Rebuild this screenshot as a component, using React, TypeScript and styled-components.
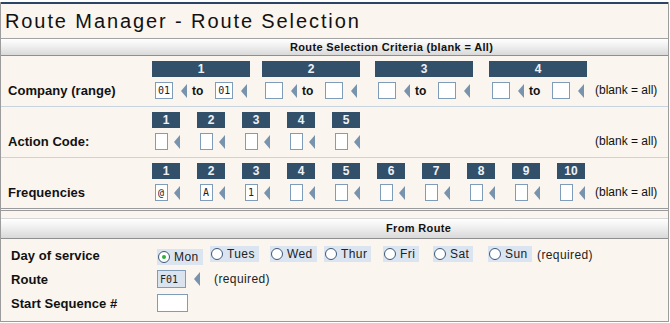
import { FC } from "react";
import styled, { createGlobalStyle } from "styled-components";

const GlobalStyle = createGlobalStyle`
  body {
    margin: 0;
    background: #ffffff;
    font-family: "Liberation Sans", Arial, sans-serif;
    color: #111;
  }
`;

const rangeGroups = [
  { n: "1", pitch: 110, from: "01", to: "01" },
  { n: "2", pitch: 113, from: "", to: "" },
  { n: "3", pitch: 114, from: "", to: "" },
  { n: "4", pitch: 106, from: "", to: "" },
];

const actionCodes = ["", "", "", "", ""];
const frequencies = ["@", "A", "1", "", "", "", "", "", "", ""];

const days = [
  { name: "Mon", slot: 53, on: true },
  { name: "Tues", slot: 60 },
  { name: "Wed", slot: 54 },
  { name: "Thur", slot: 59 },
  { name: "Fri", slot: 50 },
  { name: "Sat", slot: 55 },
  { name: "Sun", slot: 49 },
];

const App: FC = () => {
  return (
    <>
      <GlobalStyle />
      <Page>
        <TopLine />
        <Title>Route Manager - Route Selection</Title>

        <Criteria>
          <SectionHeader indent={289}>Route Selection Criteria (blank = All)</SectionHeader>

          <CritRow>
            <Label>Company (range)</Label>
            <Groups>
              {rangeGroups.map((g) => (
                <Group key={g.n} pitch={g.pitch}>
                  <Bar width={98}>{g.n}</Bar>
                  <InputLine>
                    <Field width={18} style={{ marginLeft: 3 }} defaultValue={g.from} />
                    <Arrow gap={8} />
                    <To>to</To>
                    <Field width={18} style={{ marginLeft: 12 }} defaultValue={g.to} />
                    <Arrow gap={8} />
                  </InputLine>
                </Group>
              ))}
            </Groups>
            <Note>(blank = all)</Note>
          </CritRow>

          <CritRow>
            <Label>Action Code:</Label>
            <Groups>
              {actionCodes.map((v, i) => (
                <Group key={i} pitch={45}>
                  <Bar width={28}>{i + 1}</Bar>
                  <InputLine>
                    <Field width={13} style={{ marginLeft: 3 }} defaultValue={v} />
                    <Arrow gap={6} />
                  </InputLine>
                </Group>
              ))}
            </Groups>
            <Note>(blank = all)</Note>
          </CritRow>

          <CritRow last>
            <Label>Frequencies</Label>
            <Groups>
              {frequencies.map((v, i) => (
                <Group key={i} pitch={45}>
                  <Bar width={28}>{i + 1}</Bar>
                  <InputLine>
                    <Field width={13} style={{ marginLeft: 3 }} defaultValue={v} />
                    <Arrow gap={6} />
                  </InputLine>
                </Group>
              ))}
            </Groups>
            <Note>(blank = all)</Note>
          </CritRow>
        </Criteria>

        <FromRoute>
          <SectionHeader indent={385} tall>From Route</SectionHeader>
          <FromBody>
            <FRow>
              <FLabel>Day of service</FLabel>
              {days.map((d) => (
                <Slot key={d.name} width={d.slot}>
                  <Choice>
                    <Radio type="radio" name="day" defaultChecked={!!d.on} />
                    <span>{d.name}</span>
                  </Choice>
                </Slot>
              ))}
              <Plain>(required)</Plain>
            </FRow>
            <FRow>
              <FLabel>Route</FLabel>
              <Field width={29} tall shaded defaultValue="F01" />
              <Arrow gap={8} />
              <Plain style={{ marginLeft: 14 }}>(required)</Plain>
            </FRow>
            <FRow>
              <FLabel>Start Sequence #</FLabel>
              <Field width={31} tall defaultValue="" />
            </FRow>
          </FromBody>
        </FromRoute>
      </Page>
    </>
  );
};

export default App;

const Page = styled.div`
  width: 667px;
  margin-top: 2px;
  border-left: 1px solid #9c9c9c;
  border-right: 1px solid #9c9c9c;
  background: #faf5ee;
`;

const TopLine = styled.div`
  height: 2px;
  background: #2c4565;
`;

const Title = styled.div`
  height: 34px;
  line-height: 34px;
  padding-left: 4px;
  font-size: 20px;
  letter-spacing: 1.9px;
  color: #111;
`;

const Criteria = styled.div`
  border-top: 1px solid #a3a3a3;
  border-bottom: 3px double #9a9a9a;
`;

const SectionHeader = styled.div<{ indent: number; tall?: boolean }>`
  height: ${(p) => (p.tall ? 19 : 16)}px;
  line-height: ${(p) => (p.tall ? 19 : 16)}px;
  padding-left: ${(p) => p.indent}px;
  background: linear-gradient(#ffffff, #f1f1f1 40%, #d9d9d9);
  border-bottom: 1px solid #8f8f8f;
  font-size: 11px;
  font-weight: bold;
  letter-spacing: 0.35px;
  color: #111;
`;

const CritRow = styled.div<{ last?: boolean }>`
  display: grid;
  grid-template-columns: 151px 443px 1fr;
  padding: 5px 0 7px;
  border-bottom: ${(p) => (p.last ? "none" : "1px solid #c8d4e0")};
`;

const Label = styled.div`
  align-self: end;
  height: 17px;
  line-height: 17px;
  padding-left: 7px;
  white-space: nowrap;
  font-size: 13px;
  font-weight: bold;
  letter-spacing: 0.05px;
`;

const Groups = styled.div`
  display: flex;
  min-width: 0;
`;

const Group = styled.div<{ pitch: number }>`
  display: flex;
  flex-direction: column;
  width: ${(p) => p.pitch}px;
  flex-shrink: 0;
`;

const Bar = styled.div<{ width: number }>`
  width: ${(p) => p.width}px;
  height: 16px;
  line-height: 16px;
  background: #33506b;
  color: #eef2f6;
  font-size: 12px;
  font-weight: bold;
  text-align: center;
`;

const InputLine = styled.div`
  display: flex;
  align-items: center;
  margin-top: 5px;
  height: 17px;
`;

const Field = styled.input<{ width: number; tall?: boolean; shaded?: boolean }>`
  box-sizing: border-box;
  width: ${(p) => p.width}px;
  height: ${(p) => (p.tall ? 18 : 17)}px;
  margin: 0;
  padding: 0 2px;
  border: 1px solid #7f9db9;
  background: ${(p) => (p.shaded ? "#dbe4ee" : "#ffffff")};
  font-family: "DejaVu Sans Mono", "Liberation Mono", monospace;
  font-size: 10px;
  color: #222;
  outline: none;
`;

const Arrow = styled.span<{ gap: number }>`
  display: inline-block;
  margin-left: ${(p) => p.gap}px;
  width: 0;
  height: 0;
  border-top: 7px solid transparent;
  border-bottom: 7px solid transparent;
  border-right: 6px solid #7893ad;
`;

const To = styled.span`
  margin-left: 5px;
  font-size: 12px;
  font-weight: bold;
`;

const Note = styled.div`
  align-self: end;
  height: 17px;
  line-height: 17px;
  font-size: 12px;
  white-space: nowrap;
`;

const FromRoute = styled.div`
  margin-top: 7px;
  border-top: 1px solid #d6d6d6;
  border-bottom: 1px solid #9a9a9a;
`;

const FromBody = styled.div`
  padding: 4px 0 6px;
`;

const FRow = styled.div`
  display: flex;
  align-items: center;
  height: 24px;
`;

const FLabel = styled.div`
  width: 146px;
  padding-left: 10px;
  flex-shrink: 0;
  font-size: 13px;
  font-weight: bold;
  letter-spacing: 0.05px;
  white-space: nowrap;
`;

const Slot = styled.div<{ width: number }>`
  width: ${(p) => p.width}px;
  flex-shrink: 0;
`;

const Choice = styled.label`
  display: inline-flex;
  align-items: center;
  gap: 4px;
  height: 16px;
  padding-right: 4px;
  background: #dbe5f1;
  font-size: 12px;
  letter-spacing: 0.4px;
  color: #222;
`;

const Radio = styled.input`
  appearance: none;
  box-sizing: border-box;
  width: 12px;
  height: 12px;
  margin: 0 0 0 1px;
  border: 1px solid #3d5877;
  border-radius: 50%;
  background: #ffffff;
  display: grid;
  place-content: center;

  &:checked::before {
    content: "";
    width: 4px;
    height: 4px;
    border-radius: 50%;
    background: #2fae3c;
  }
`;

const Plain = styled.span`
  font-size: 12px;
  letter-spacing: 0.4px;
  color: #222;
  white-space: nowrap;
`;
